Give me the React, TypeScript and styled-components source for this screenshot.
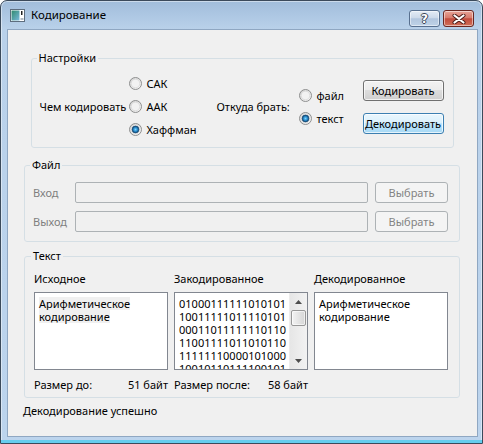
import styled, { createGlobalStyle } from 'styled-components';

const GlobalStyle = createGlobalStyle`
  html, body {
    margin: 0;
    padding: 0;
    background: #ffffff;
  }
  body {
    font-family: "Noto Sans", "Liberation Sans", sans-serif;
    font-size: 11px;
    color: #000;
  }
`;

const Window = styled.div`
  width: 483px;
  height: 444px;
  box-sizing: border-box;
  display: flex;
  flex-direction: column;
  border: 1px solid #3b4a5b;
  border-radius: 7px 7px 0 0;
  background: linear-gradient(#a1bddb, #b9d1ea 28px, #bcd4ed);
  box-shadow: inset 0 -3px 0 #66cdee, inset 0 0 0 1px rgba(255, 255, 255, 0.45);
  overflow: hidden;
`;

const TitleBar = styled.div`
  height: 28px;
  flex: none;
  display: flex;
  align-items: center;
  padding: 0 8px 0 9px;
`;

const TitleText = styled.span`
  margin-left: 6px;
  font-size: 11.5px;
  line-height: 16px;
`;

const CaptionButtons = styled.div`
  margin-left: auto;
  align-self: flex-start;
  margin-top: 9px;
  display: flex;
  gap: 3px;
`;

const CaptionButton = styled.div<{ $close?: boolean }>`
  width: 31px;
  height: 17px;
  box-sizing: border-box;
  border: 1px solid ${(p) => (p.$close ? '#6a2620' : '#58708f')};
  border-radius: 3px;
  display: flex;
  align-items: center;
  justify-content: center;
  background: ${(p) =>
    p.$close
      ? 'linear-gradient(#e8a497, #d77a6c 45%, #c24b3c 52%, #d06f58)'
      : 'linear-gradient(#e4ecf5, #cddaea 45%, #b2c6de 52%, #bed2e7)'};
  box-shadow: inset 0 0 0 1px rgba(255, 255, 255, 0.5);
`;

const HelpGlyph = styled.span`
  font-family: "DejaVu Sans", sans-serif;
  font-weight: bold;
  font-size: 12px;
  line-height: 12px;
  color: #fff;
  text-shadow: 1px 0 0 #3a4656, -1px 0 0 #3a4656, 0 1px 0 #3a4656, 0 -1px 0 #3a4656;
`;

const Client = styled.div`
  flex: 1;
  margin: 0 4px 6px 6px;
  border: 1px solid #8fa7c2;
  background: #f0f0f0;
  display: flex;
  flex-direction: column;
  padding: 0 17px 0 16px;
`;

const Group = styled.fieldset`
  box-sizing: border-box;
  margin: 0;
  min-width: 0;
  border: 1px solid #d5dfe5;
  border-radius: 3px;
`;

const SettingsGroup = styled(Group)`
  align-self: center;
  width: 423px;
  margin-top: 20px;
  padding: 6px 9px 6px 8px;
`;

const FileGroup = styled(Group)`
  margin-top: 9px;
  padding: 9px 10px 9px 8px;
`;

const TextGroup = styled(Group)`
  margin-top: 6px;
  padding: 7px 10px 6px 9px;
`;

const Legend = styled.legend`
  padding: 0 2px;
  margin-left: -3px;
  line-height: 16px;
`;

const SettingsGrid = styled.div`
  display: grid;
  grid-template-columns: 89px 88px 82px 64px 81px;
  align-items: center;
  height: 69px;
`;

const Label = styled.span<{ $disabled?: boolean }>`
  white-space: nowrap;
  line-height: 16px;
  color: ${(p) => (p.$disabled ? '#7f7f7f' : '#000')};
`;

const RadioColumn = styled.div`
  display: flex;
  flex-direction: column;
`;

const RadioRow = styled.label`
  height: 23px;
  display: flex;
  align-items: center;
  gap: 5px;
  white-space: nowrap;
`;

const ButtonColumn = styled.div`
  display: flex;
  flex-direction: column;
  gap: 12px;
`;

const PushButton = styled.div<{ $focused?: boolean; $disabled?: boolean }>`
  height: 21px;
  box-sizing: border-box;
  display: flex;
  align-items: center;
  justify-content: center;
  border-radius: 3px;
  white-space: nowrap;
  border: 1px solid ${(p) => (p.$disabled ? '#adb2b5' : p.$focused ? '#3c7fb1' : '#707070')};
  color: ${(p) => (p.$disabled ? '#838383' : '#000')};
  background: ${(p) =>
    p.$disabled
      ? '#f4f4f4'
      : p.$focused
        ? 'linear-gradient(#eaf6fd, #d9f0fc 50%, #bee6fd 50%, #a7d9f5)'
        : 'linear-gradient(#f2f2f2, #ebebeb 50%, #dddddd 50%, #cfcfcf)'};
  box-shadow: ${(p) => (p.$disabled ? 'none' : 'inset 0 0 0 1px rgba(255, 255, 255, 0.7)')};
`;

const FileGrid = styled.div`
  display: grid;
  grid-template-columns: 35px 293px 73px;
  column-gap: 7px;
  row-gap: 8px;
  grid-auto-rows: 21px;
  align-items: center;
`;

const LineEdit = styled.div`
  height: 21px;
  box-sizing: border-box;
  border: 1px solid #adb2b5;
  border-radius: 2px;
  background: #f0f0f0;
`;

const TextGrid = styled.div`
  display: grid;
  grid-template-columns: repeat(3, 134px);
  grid-template-rows: 16px 78px 16px;
  column-gap: 6px;
  row-gap: 5px;
`;

const TextBox = styled.div`
  box-sizing: border-box;
  border: 1px solid #828790;
  background: #fff;
  display: flex;
  overflow: hidden;
`;

const TextContent = styled.div`
  flex: 1;
  padding: 4px 4px;
  line-height: 13px;
  overflow: hidden;
  white-space: pre;
`;

const Selected = styled.span`
  display: inline-block;
  height: 13px;
  line-height: 13px;
  background: #f0f0f0;
`;

const ScrollBar = styled.div`
  width: 17px;
  flex: none;
  display: flex;
  flex-direction: column;
  background: linear-gradient(90deg, #e6e6e6, #f2f2f2);
  border-left: 1px solid #ececec;
`;

const ScrollArrow = styled.div`
  height: 17px;
  flex: none;
  display: flex;
  align-items: center;
  justify-content: center;
`;

const ScrollTrack = styled.div`
  flex: 1;
  padding: 0 1px;
`;

const ScrollThumb = styled.div`
  height: 16px;
  box-sizing: border-box;
  border: 1px solid #979797;
  border-radius: 2px;
  background: linear-gradient(90deg, #f3f3f3, #e4e4e4 50%, #d6d6d6);
  box-shadow: inset 0 0 0 1px rgba(255, 255, 255, 0.6);
`;

const Footer = styled.div`
  margin-top: 2px;
  display: flex;
  justify-content: space-between;
  line-height: 16px;
  white-space: nowrap;
`;

const Status = styled.div`
  margin: 5px 0 0 -1px;
  line-height: 16px;
`;

const Radio = ({ checked }: { checked?: boolean }) => (
  <svg width="13" height="13" viewBox="0 0 13 13">
    <defs>
      <linearGradient id="rbOuter" x1="0" y1="0" x2="1" y2="1">
        <stop offset="0" stopColor="#d0d0d0" />
        <stop offset="1" stopColor="#fafafa" />
      </linearGradient>
      <radialGradient id="rbDot" cx="0.5" cy="0.5" r="0.5">
        <stop offset="0" stopColor="#7fd6ff" />
        <stop offset="0.55" stopColor="#2a8ecf" />
        <stop offset="1" stopColor="#0d3f6b" />
      </radialGradient>
    </defs>
    <circle cx="6.5" cy="6.5" r="6" fill="url(#rbOuter)" stroke="#8e8f8f" />
    <circle cx="6.5" cy="6.5" r="4.3" fill="#f2f2f2" stroke="#d9d9d9" strokeWidth="0.8" />
    {checked && <circle cx="6.5" cy="6.5" r="3.4" fill="url(#rbDot)" stroke="#1b4f7a" strokeWidth="0.8" />}
  </svg>
);

const Arrow = ({ up }: { up?: boolean }) => (
  <svg width="7" height="4" viewBox="0 0 7 4">
    <path d={up ? 'M0 4 L3.5 0 L7 4 Z' : 'M0 0 L3.5 4 L7 0 Z'} fill="#4d4d4d" />
  </svg>
);

const WindowIcon = () => (
  <svg width="15" height="13" viewBox="0 0 15 13">
    <defs>
      <linearGradient id="wiFill" x1="0" y1="0" x2="1" y2="1">
        <stop offset="0" stopColor="#2f8a6e" />
        <stop offset="1" stopColor="#79b9dc" />
      </linearGradient>
    </defs>
    <rect x="0.5" y="0.5" width="14" height="12" fill="#fff" stroke="#5d6d7e" />
    <rect x="1.5" y="1.5" width="8" height="10" fill="url(#wiFill)" />
    <rect x="11" y="2" width="1.5" height="4" fill="#222" />
    <rect x="10.5" y="9" width="3" height="2" fill="#b4bcc4" />
  </svg>
);

const CloseGlyph = () => (
  <svg width="14" height="10" viewBox="0 0 14 10">
    <path d="M2.5 1.5 L11.5 8.5 M11.5 1.5 L2.5 8.5" stroke="#4a1a16" strokeWidth="4" strokeLinecap="round" />
    <path d="M2.5 1.5 L11.5 8.5 M11.5 1.5 L2.5 8.5" stroke="#fff" strokeWidth="2.2" strokeLinecap="round" />
  </svg>
);

const binary = [
  '01000111111010101',
  '10011111011110101',
  '00011011111110110',
  '11001111011010110',
  '11111110000101000',
  '10010110111100101',
];

export default function App() {
  return (
    <>
      <GlobalStyle />
      <Window>
        <TitleBar>
          <WindowIcon />
          <TitleText>Кодирование</TitleText>
          <CaptionButtons>
            <CaptionButton>
              <HelpGlyph>?</HelpGlyph>
            </CaptionButton>
            <CaptionButton $close>
              <CloseGlyph />
            </CaptionButton>
          </CaptionButtons>
        </TitleBar>

        <Client>
          <SettingsGroup>
            <Legend>Настройки</Legend>
            <SettingsGrid>
              <Label>Чем кодировать</Label>
              <RadioColumn>
                <RadioRow>
                  <Radio />
                  САК
                </RadioRow>
                <RadioRow>
                  <Radio />
                  ААК
                </RadioRow>
                <RadioRow>
                  <Radio checked />
                  Хаффман
                </RadioRow>
              </RadioColumn>
              <Label>Откуда брать:</Label>
              <RadioColumn>
                <RadioRow>
                  <Radio />
                  файл
                </RadioRow>
                <RadioRow>
                  <Radio checked />
                  текст
                </RadioRow>
              </RadioColumn>
              <ButtonColumn>
                <PushButton>Кодировать</PushButton>
                <PushButton $focused>Декодировать</PushButton>
              </ButtonColumn>
            </SettingsGrid>
          </SettingsGroup>

          <FileGroup>
            <Legend>Файл</Legend>
            <FileGrid>
              <Label $disabled>Вход</Label>
              <LineEdit />
              <PushButton $disabled>Выбрать</PushButton>
              <Label $disabled>Выход</Label>
              <LineEdit />
              <PushButton $disabled>Выбрать</PushButton>
            </FileGrid>
          </FileGroup>

          <TextGroup>
            <Legend>Текст</Legend>
            <TextGrid>
              <Label>Исходное</Label>
              <Label>Закодированное</Label>
              <Label>Декодированное</Label>

              <TextBox>
                <TextContent>
                  <Selected>Арифметическое</Selected>
                  {'\n'}
                  <Selected>кодирование</Selected>
                </TextContent>
              </TextBox>
              <TextBox>
                <TextContent>{binary.join('\n')}</TextContent>
                <ScrollBar>
                  <ScrollArrow>
                    <Arrow up />
                  </ScrollArrow>
                  <ScrollTrack>
                    <ScrollThumb />
                  </ScrollTrack>
                  <ScrollArrow>
                    <Arrow />
                  </ScrollArrow>
                </ScrollBar>
              </TextBox>
              <TextBox>
                <TextContent>{'Арифметическое\nкодирование'}</TextContent>
              </TextBox>

              <Footer>
                <span>Размер до:</span>
                <span>51 байт</span>
              </Footer>
              <Footer>
                <span>Размер после:</span>
                <span>58 байт</span>
              </Footer>
              <Footer />
            </TextGrid>
          </TextGroup>

          <Status>Декодирование успешно</Status>
        </Client>
      </Window>
    </>
  );
}
